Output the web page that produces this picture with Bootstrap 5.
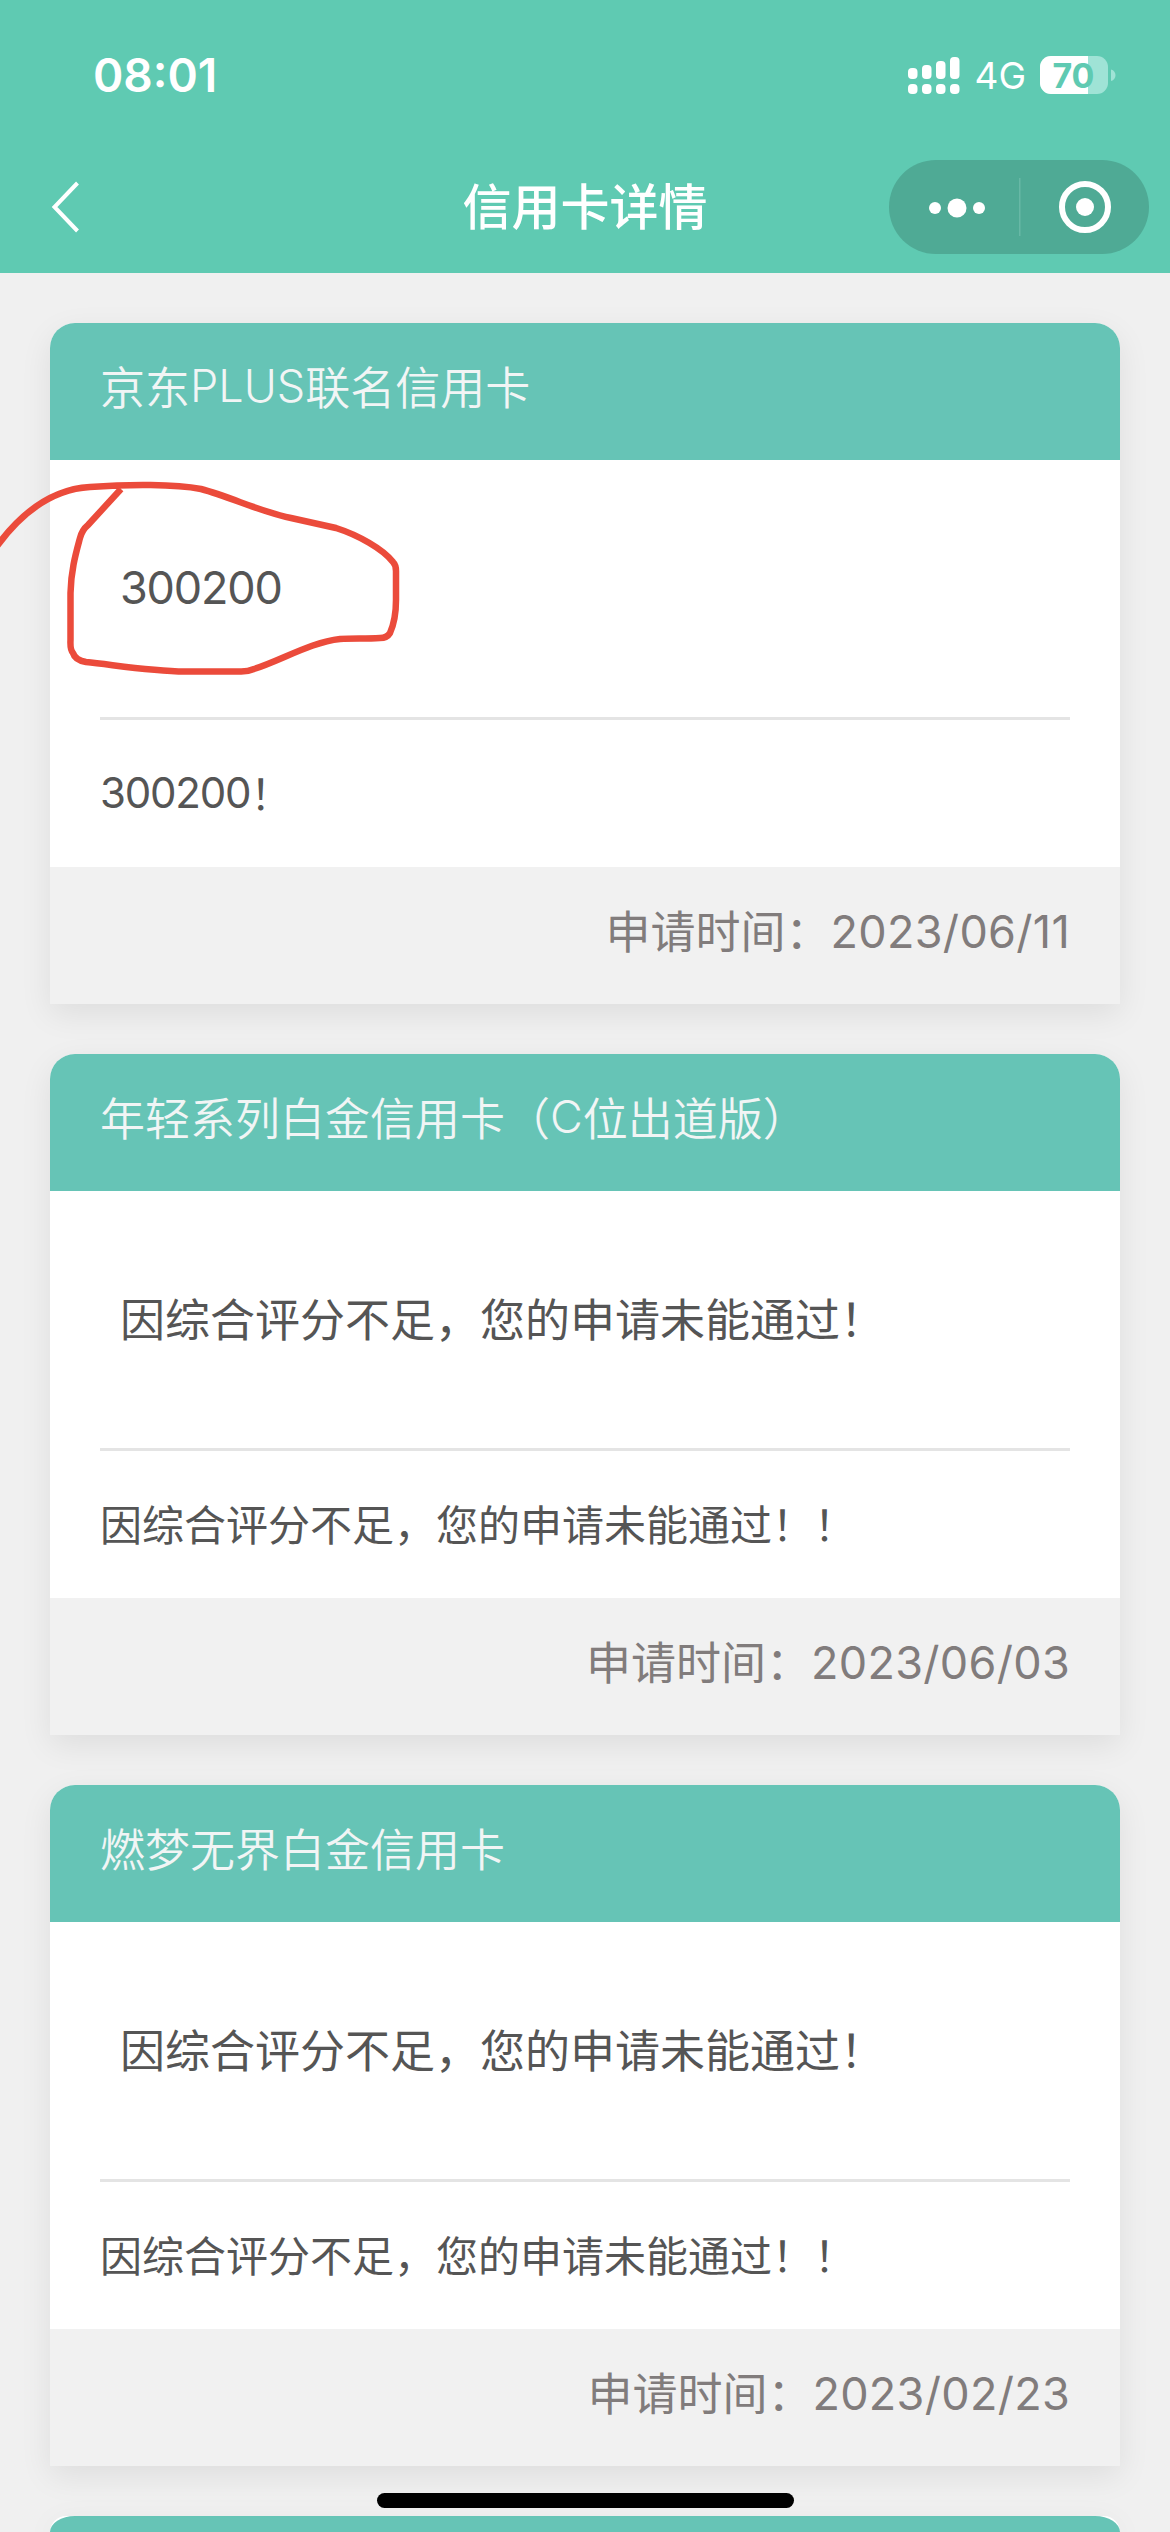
<!DOCTYPE html>
<html lang="zh-CN">
<head>
    <meta charset="utf-8" />
    <title>信用卡详情</title>
    <meta name="viewport" content="width=device-width, initial-scale=1" />
    <link href="https://cdn.jsdelivr.net/npm/bootstrap@5.3.2/dist/css/bootstrap.min.css" rel="stylesheet">
    <style>
        body {
            font-family: "Noto Sans CJK SC", sans-serif;
            background-color: #f0f0f0;
            width: 1170px;
            height: 2532px;
            overflow: hidden;
        }

        .top-area {
            height: 273px;
            background-color: #5fcab2;
            color: #fff;
        }

        .status-row {
            height: 141px;
            padding: 8px 53px 0 93px;
            font-family: Inter, sans-serif;
        }

        .clock {
            font-size: 46px;
            font-weight: 600;
            line-height: 56px;
        }

        .network {
            font-size: 37px;
            line-height: 46px;
            margin: 2px 14px 0 14px;
        }

        .title-row {
            height: 132px;
            padding: 0 21px 0 51px;
        }

        .side {
            width: 230px;
        }

        .page-title {
            font-size: 49px;
            font-weight: 500;
            line-height: 60px;
            padding-bottom: 6px;
        }

        .capsule {
            width: 260px;
            height: 94px;
            border-radius: 47px;
            background-color: #4faa95;
        }

        .card-list {
            height: 2259px;
            padding: 50px 50px 0;
            gap: 50px;
        }

        .apply-card {
            border: 0;
            border-radius: 25px 25px 0 0;
            box-shadow: 0 10px 32px rgba(0, 0, 0, 0.08);
            background-color: #fff;
            flex-shrink: 0;
        }

            .apply-card .card-header,
            .apply-card .card-footer {
                height: 137px;
                padding: 0 50px 11px;
                border: 0;
                font-size: 45px;
                line-height: 60px;
            }

            .apply-card .card-header {
                background-color: #66c4b6;
                border-radius: 25px 25px 0 0;
                color: #f1f5f5;
                font-weight: 350;
            }

            .apply-card .card-footer {
                background-color: #f1f1f1;
                border-radius: 0;
                color: #817c7c;
            }

            .apply-card .card-body {
                color: #555;
                padding: 0 50px;
            }

        .result {
            height: 260px;
            padding: 0 0 4px 20px;
            border-bottom: 3px solid #e4e4e4;
            font-size: 45px;
            line-height: 60px;
        }

        .remark {
            height: 147px;
            padding-bottom: 4px;
            font-size: 42px;
            line-height: 60px;
        }

        .latin,
        .num {
            font-family: Inter, sans-serif;
        }

        .num {
            letter-spacing: 0.3px;
            padding-top: 3px;
        }

        .code {
            letter-spacing: -1.2px;
        }

        .apply-card .peek {
            height: 16px;
            padding: 0;
            border-radius: 25px 25px 0 0 / 16px 16px 0 0;
        }

        .pen {
            position: absolute;
            left: 0;
            top: 460px;
            pointer-events: none;
        }

        .home-bar {
            position: absolute;
            left: 377px;
            top: 2493px;
            width: 417px;
            height: 15px;
            border-radius: 8px;
            background-color: #000;
        }
    </style>
</head>
<body class="position-relative">
    <header class="top-area">
        <div class="status-row d-flex align-items-center justify-content-between">
            <span class="clock">08:01</span>
            <div class="d-flex align-items-center">
                <svg width="52" height="38" viewBox="0 0 52 38" fill="#fff">
                    <rect x="0" y="12" width="9.5" height="11" rx="4" />
                    <rect x="14" y="9" width="9.5" height="14" rx="4" />
                    <rect x="28" y="5" width="9.5" height="18" rx="4" />
                    <rect x="42" y="1" width="9.5" height="22" rx="4" />
                    <rect x="0" y="28" width="9.5" height="10" rx="4" />
                    <rect x="14" y="28" width="9.5" height="10" rx="4" />
                    <rect x="28" y="28" width="9.5" height="10" rx="4" />
                    <rect x="42" y="28" width="9.5" height="10" rx="4" />
                </svg>
                <span class="network">4G</span>
                <svg width="77" height="38" viewBox="0 0 77 38">
                    <clipPath id="level"><rect width="48" height="38" /></clipPath>
                    <rect width="68" height="38" rx="11" fill="#9fe3d6" />
                    <rect width="68" height="38" rx="11" fill="#fff" clip-path="url(#level)" />
                    <path d="M71 13.500c6 1.500 6 10 0 11.500z" fill="#9fe3d6" />
                    <text x="33.500" y="31.500" text-anchor="middle" font-size="34" font-weight="700" fill="#5fcab2" textLength="42">70</text>
                </svg>
            </div>
        </div>
        <div class="title-row d-flex align-items-center justify-content-between">
            <div class="side">
                <svg width="30" height="52" viewBox="0 0 30 52" fill="none" stroke="#fff" stroke-width="4">
                    <path d="M26.500 2L3.500 26l23 24" />
                </svg>
            </div>
            <div class="page-title">信用卡详情</div>
            <div class="capsule">
                <svg width="260" height="94" viewBox="0 0 260 94" fill="#fff">
                    <circle cx="46" cy="48" r="6" />
                    <circle cx="68" cy="48" r="9.500" />
                    <circle cx="90" cy="48" r="6" />
                    <rect x="130" y="18" width="1.500" height="58" fill="#68b8a6" />
                    <circle cx="196" cy="47" r="23" fill="none" stroke="#fff" stroke-width="6" />
                    <circle cx="196" cy="47" r="9" />
                </svg>
            </div>
        </div>
    </header>

    <main class="card-list d-flex flex-column">
        <div class="card apply-card">
            <div class="card-header d-flex align-items-center">京东<span class="latin">PLUS</span>联名信用卡</div>
            <div class="card-body">
                <div class="result d-flex align-items-center"><span class="num code">300200</span></div>
                <div class="remark d-flex align-items-center"><span class="num code">300200</span>！</div>
            </div>
            <div class="card-footer d-flex align-items-center justify-content-end">申请时间：<span class="num">2023/06/11</span></div>
        </div>

        <div class="card apply-card">
            <div class="card-header d-flex align-items-center">年轻系列白金信用卡（<span class="latin">C</span>位出道版）</div>
            <div class="card-body">
                <div class="result d-flex align-items-center">因综合评分不足，您的申请未能通过！</div>
                <div class="remark d-flex align-items-center">因综合评分不足，您的申请未能通过！！</div>
            </div>
            <div class="card-footer d-flex align-items-center justify-content-end">申请时间：<span class="num">2023/06/03</span></div>
        </div>

        <div class="card apply-card">
            <div class="card-header d-flex align-items-center">燃梦无界白金信用卡</div>
            <div class="card-body">
                <div class="result d-flex align-items-center">因综合评分不足，您的申请未能通过！</div>
                <div class="remark d-flex align-items-center">因综合评分不足，您的申请未能通过！！</div>
            </div>
            <div class="card-footer d-flex align-items-center justify-content-end">申请时间：<span class="num">2023/02/23</span></div>
        </div>

        <div class="card apply-card">
            <div class="card-header peek"></div>
        </div>
    </main>

    <!-- red pen mark around the first result -->
    <svg class="pen" width="420" height="230" viewBox="0 460 420 230" fill="none" stroke="#eb4b3b" stroke-width="6.500" stroke-linejoin="round">
        <path d="M-3 546C25 508 55 489 90 487C130 484 175 484 201 489C231 497 261 512 291 518L336 528C358 535 383 549 393 562Q396 565 396 571V600C396 613 394 624 390 633Q387 638 380 638C365 639 353 638 340 639C311 642 280 661 254 669Q247 672 239 671.500H185C150 671 115 665 86 662Q75 660 73 653Q70 650 70.500 640V593C71 570 76 553 80 538Q82 530 88 525L121 489" />
    </svg>
    <div class="home-bar"></div>

    <script src="https://cdn.jsdelivr.net/npm/bootstrap@5.3.2/dist/js/bootstrap.bundle.min.js"></script>
</body>
</html>
